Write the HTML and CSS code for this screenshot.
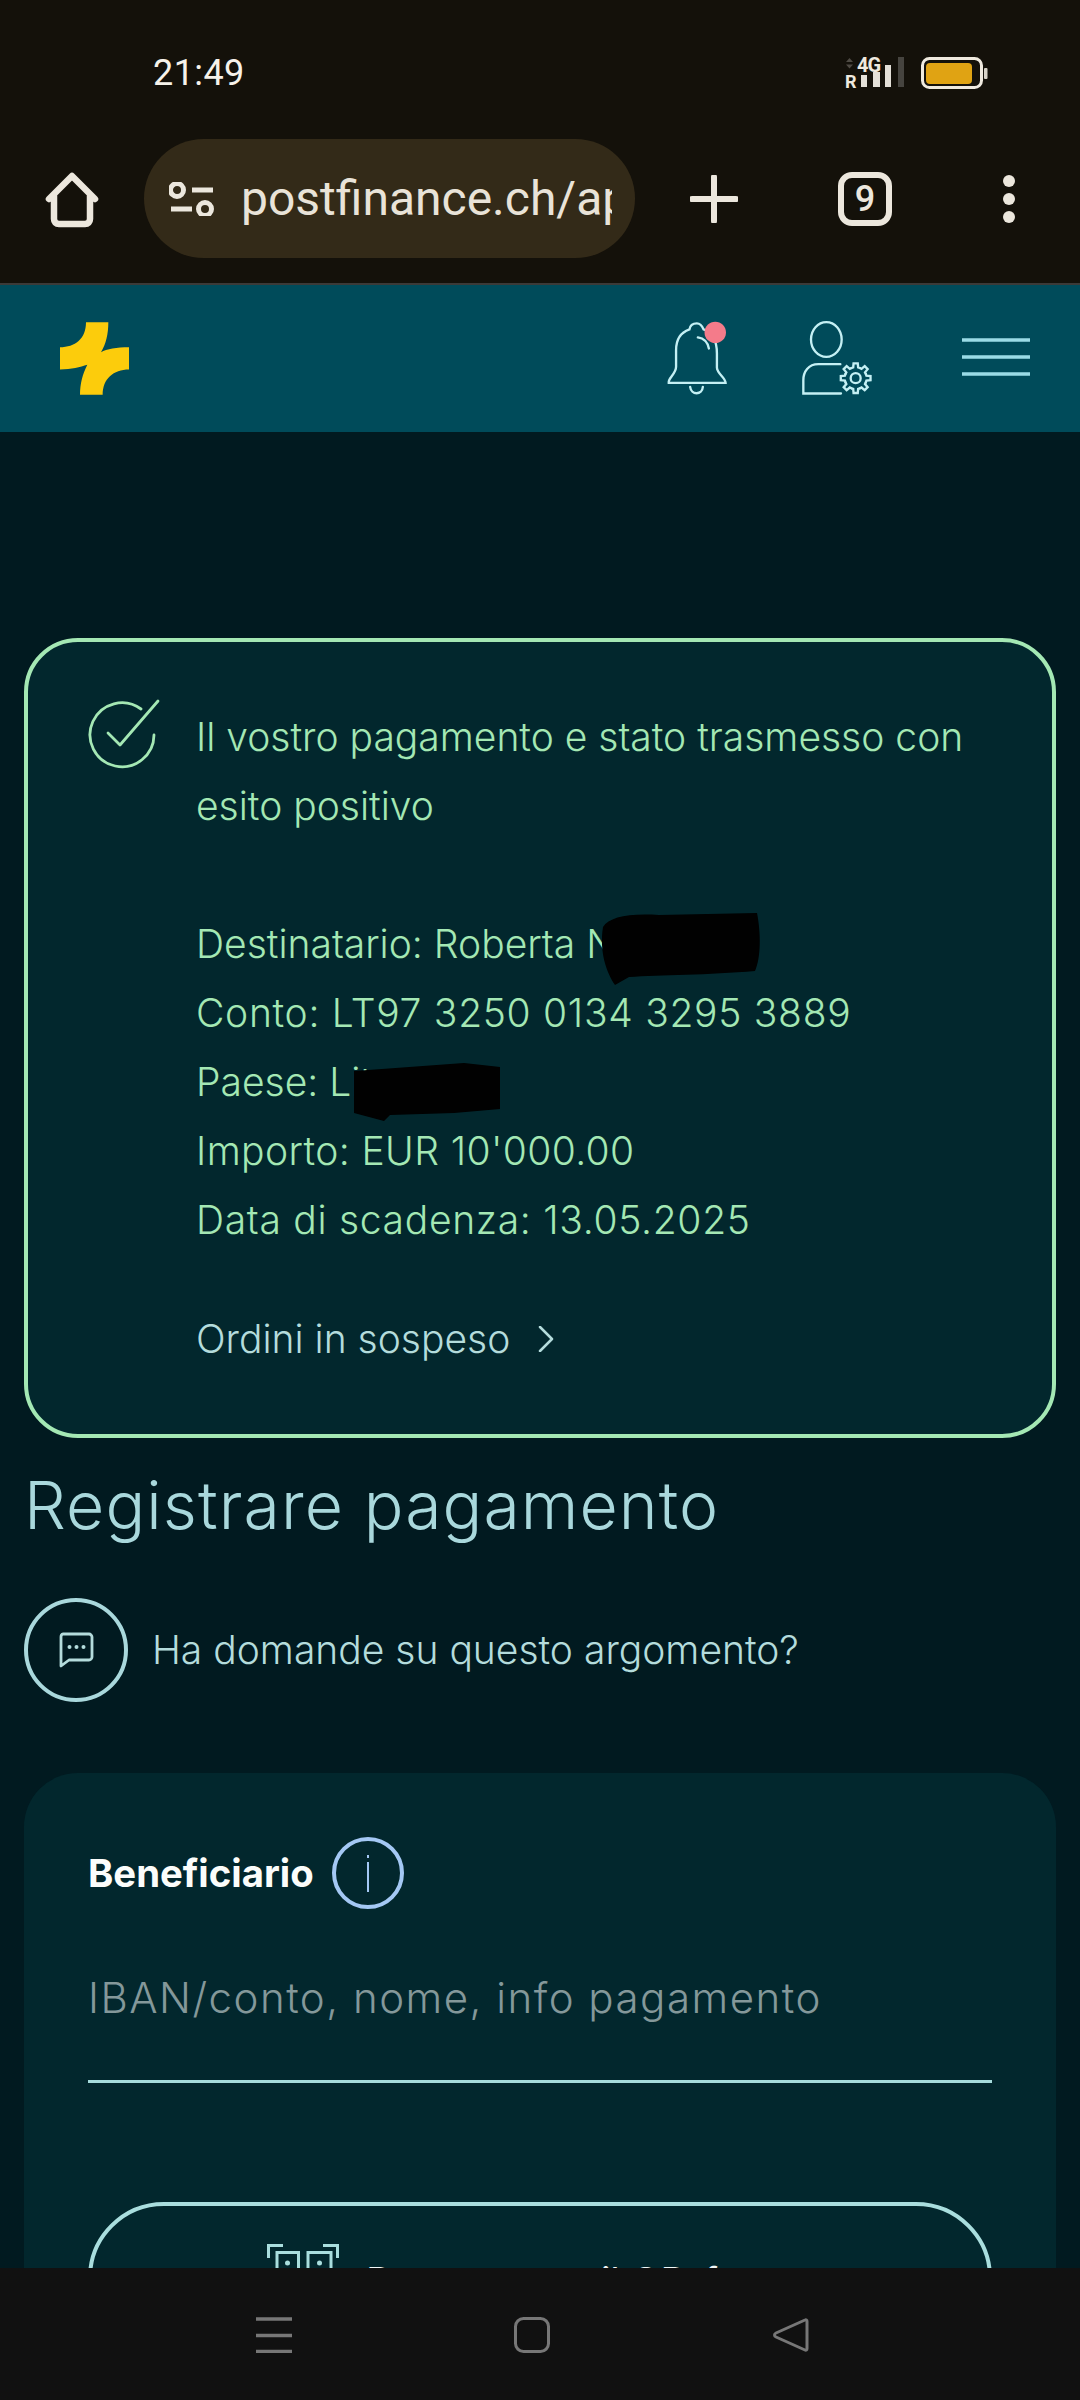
FILE: index.html
```html
<!DOCTYPE html>
<html lang="it">
<head>
<meta charset="utf-8">
<title>PostFinance</title>
<link rel="stylesheet" href="styles.css">
</head>
<body>
<div class="screen">
  <div class="chrome">
    <div class="status">
      <span class="time">21:49</span>
      <svg class="signal" viewBox="0 0 62 34" width="62" height="34">
        <path class="dim" d="M1 7 4.500 3 8 7ZM1 9.500 4.500 13.500 8 9.500Z"/>
        <text class="g4" x="12" y="17">4G</text>
        <text class="r" x="0" y="33">R</text>
        <rect class="bar" x="16" y="20" width="6" height="12"/>
        <rect class="bar" x="28" y="17" width="7" height="15"/>
        <rect class="bar" x="40" y="10" width="6" height="22"/>
        <rect class="bar-off" x="53" y="2" width="6" height="30"/>
      </svg>
      <svg class="battery" viewBox="0 0 68 32" width="68" height="32">
        <rect class="batt-frame" x="1.500" y="1.500" width="59" height="29" rx="7"/>
        <rect class="batt-fill" x="5" y="6" width="46" height="21" rx="4"/>
        <rect class="batt-nub" x="63" y="11" width="3.500" height="11" rx="1"/>
      </svg>
    </div>
    <div class="toolbar">
      <svg class="home" viewBox="0 0 60 60" width="60" height="60">
        <path d="M7 30 30 7 53 30M12 27V50C12 53 14 55 17 55H43C46 55 48 53 48 50V27" />
      </svg>
      <div class="pill">
        <svg class="tune" viewBox="0 0 46 34" width="46" height="34">
          <circle cx="8" cy="8" r="6.500"/><path d="M23 8H44M2 27H23"/><circle cx="36" cy="27" r="6.500"/>
        </svg>
        <span class="url">postfinance.ch/ap</span>
      </div>
      <svg class="plus" viewBox="0 0 48 48" width="48" height="48"><path d="M2 24H46M24 2V46"/></svg>
      <div class="tabs">9</div>
      <svg class="dots" viewBox="0 0 14 50" width="14" height="50"><circle cx="7" cy="7" r="6"/><circle cx="7" cy="25" r="6"/><circle cx="7" cy="43" r="6"/></svg>
    </div>
  </div>
  <header class="head">
    <svg class="logo" viewBox="180 575 207 218" width="69" height="73">
      <path d="M258 575H325C325 610 318 640 303 665C320 655 350 650 387 650V717C340 717 308 745 308 793H240C240 760 248 730 262 703C240 710 215 717 180 717V650C225 650 258 625 258 575Z"/>
    </svg>
    <div class="head-icons">
      <svg class="bell" viewBox="80 90 185 230" width="62" height="77">
        <path d="M88 278C86 262 110 252 110 230V180C110 140 130 125 150 118C152 105 162 100 172 100C182 100 188 108 192 118C220 128 232 150 232 190V232C232 250 258 262 258 278ZM175 142C195 145 205 160 208 175M152 290C155 315 188 315 190 290"/>
        <circle class="badge" cx="227" cy="127" r="32"/>
      </svg>
      <svg class="user" viewBox="485 90 225 230" width="75" height="77">
        <defs><path id="tooth" d="M-12.600 -30.500-7.400 -32.200-6.300 -44.600H6.300L7.400 -32.200 12.600 -30.500"/></defs>
        <ellipse cx="564" cy="148" rx="46" ry="52"/>
        <path d="M606 222H540C510 222 495 245 495 270V310H608"/>
        <g transform="translate(652 264)">
          <circle r="15"/>
          <use href="#tooth"/><use href="#tooth" transform="rotate(45)"/><use href="#tooth" transform="rotate(90)"/><use href="#tooth" transform="rotate(135)"/><use href="#tooth" transform="rotate(180)"/><use href="#tooth" transform="rotate(225)"/><use href="#tooth" transform="rotate(270)"/><use href="#tooth" transform="rotate(315)"/>
        </g>
      </svg>
      <svg class="burger" viewBox="0 0 68 38" width="68" height="38"><path d="M0 2H68M0 19H68M0 36H68"/></svg>
    </div>
  </header>
  <main class="content">
    <section class="notice">
      <svg class="check" viewBox="0 0 74 70" width="74" height="70">
        <path d="M55 10A32 32 0 1 0 68 36"/>
        <path d="M22 34 34 46 72 2"/>
      </svg>
      <div class="notice-body">
        <p class="line">Il vostro pagamento e stato trasmesso con</p>
        <p class="line">esito positivo</p>
        <p class="line spaced">Destinatario: Roberta N
          <svg class="blob blob-name" viewBox="0 0 162 72" width="162" height="72"><path d="M4 14C10 4 30 0 60 2L158 0C162 20 162 45 156 58C110 62 60 62 30 64L16 72C8 60 0 40 4 14Z"/></svg>
        </p>
        <p class="line digits">Conto: LT97 3250 0134 3295 3889</p>
        <p class="line">Paese: Lituania
          <svg class="blob blob-country" viewBox="0 0 146 58" width="146" height="58"><path d="M0 8 28 6 110 0 146 4V46L100 50 36 52 30 58 0 50Z"/></svg>
        </p>
        <p class="line amount">Importo: EUR 10'000.00</p>
        <p class="line digits">Data di scadenza: 13.05.2025</p>
        <a class="pending">Ordini in sospeso
          <svg class="chev" viewBox="0 0 16 26" width="16" height="26"><path d="M2 1 14 13 2 25"/></svg>
        </a>
      </div>
    </section>
    <h1 class="title">Registrare pagamento</h1>
    <div class="help">
      <span class="help-ring">
        <svg viewBox="0 0 36 36" width="36" height="36">
          <path d="M5 2H31C32.500 2 34 3.500 34 5V25C34 26.500 32.500 28 31 28H11L3 34V5C3 3.500 3.500 2 5 2Z"/>
          <circle class="dot" cx="11.500" cy="15" r="2"/><circle class="dot" cx="18.500" cy="15" r="2"/><circle class="dot" cx="25.500" cy="15" r="2"/>
        </svg>
      </span>
      <span class="help-text">Ha domande su questo argomento?</span>
    </div>
    <section class="form-card">
      <div class="field-label">
        <span class="label-text">Beneficiario</span>
        <span class="info"><span class="info-i"></span></span>
      </div>
      <div class="input">IBAN/conto, nome, info pagamento</div>
      <div class="qr-button">
        <svg class="qr" viewBox="0 0 72 72" width="72" height="72">
          <path d="M1.500 14V1.500H16M56 1.500H70.500V14M10 60V8.500H31.500V60M41 60V8.500H64V60"/>
          <circle class="dot" cx="20.500" cy="19" r="2.500"/><circle class="dot" cx="52.500" cy="19" r="2.500"/>
        </svg>
        <span class="qr-text">Procura con il QR-fattura</span>
      </div>
    </section>
  </main>
  <nav class="sysnav">
    <svg class="nav-menu" viewBox="0 0 36 36" width="36" height="36"><path d="M0 2H36M0 18.500H36M0 34.500H36"/></svg>
    <svg class="nav-home" viewBox="0 0 36 36" width="36" height="36"><rect x="1.500" y="1.500" width="33" height="33" rx="8"/></svg>
    <svg class="nav-back" viewBox="0 0 36 36" width="36" height="36"><path d="M32 3C33 2.500 34 3 34 4.500V31.500C34 33 33 33.500 32 33L3 20C1 19 1 17 3 16Z"/></svg>
  </nav>
</div>
</body>
</html>
```
FILE: styles.css
```css
* { box-sizing: border-box; }
html, body { margin: 0; padding: 0; background: #011a20; }
body { font-family: "Inter", "Noto Sans", sans-serif; font-weight: 300; }
svg { display: block; flex: none; fill: none; }
p { margin: 0; }

.screen { width: 1080px; height: 2400px; display: flex; flex-direction: column; overflow: hidden; }

.chrome { height: 285px; flex: none; background: #14110a; border-bottom: 2px solid #3b3a38; }
.status { height: 139px; display: flex; align-items: flex-start; padding: 55px 91px 0 153px; }
.time { font-family: "Roboto", sans-serif; font-weight: 400; font-size: 36px; line-height: 36px; color: #f6f2ea; letter-spacing: .4px; margin-right: auto; }
.signal { margin-top: 0; margin-left: 0; overflow: visible; }
.battery { margin: 2px 0 0 14px; }
.g4 { font: 700 20px "Roboto", sans-serif; fill: #eee9df; letter-spacing: -1px; }
.r { font: 700 18px "Roboto", sans-serif; fill: #eee9df; }
.bar { fill: #e4e0d8; }
.bar-off { fill: #46443f; }
.dim { fill: #4f4b44; }
.batt-frame { stroke: #efeadf; stroke-width: 3; }
.batt-fill { fill: #e0a313; }
.batt-nub { fill: #d8d3c8; }

.toolbar { display: flex; align-items: flex-start; height: 144px; padding-left: 42px; }
.home { margin-top: 30px; }
.home path { stroke: #ece7dd; stroke-width: 6.500; stroke-linecap: round; stroke-linejoin: round; }
.pill { width: 491px; height: 119px; margin-left: 42px; border-radius: 60px; background: #332a18; display: flex; align-items: center; padding: 0 23px 0 25px; overflow: hidden; }
.tune circle, .tune path { stroke: #ece7dd; stroke-width: 5; }
.url { font-family: "Roboto", sans-serif; font-weight: 400; font-size: 48px; color: #e9e3d8; margin-left: 26px; white-space: nowrap; overflow: hidden; flex: 1; }
.plus { margin: 36px 0 0 55px; }
.plus path { stroke: #ece7dd; stroke-width: 6; stroke-linecap: round; }
.tabs { width: 54px; height: 54px; margin: 33px 0 0 100px; border: 6px solid #ece7dd; border-radius: 14px; display: flex; align-items: center; justify-content: center; font-family: "Roboto", sans-serif; font-weight: 500; font-size: 36px; color: #ece7dd; }
.dots { margin: 35px 0 0 110px; }
.dots circle { fill: #ece7dd; }

.head { height: 147px; flex: none; background: #004b5a; display: flex; align-items: center; justify-content: space-between; padding: 0 50px 0 60px; }
.logo path { fill: #fccc0c; }
.head-icons { display: flex; align-items: center; }
.bell path, .user path, .user ellipse, .user circle, .user use { stroke: #c4f0f4; stroke-width: 7; stroke-linecap: round; }
.badge { fill: #f47b8a; }
.user { margin-left: 72px; }
.burger { margin-left: 87px; margin-top: -4px; }
.burger path { stroke: #9adbe6; stroke-width: 3.500; }

.content { flex: 1; min-height: 0; overflow: hidden; padding: 206px 24px 0; background: #011a20; }

.notice { height: 800px; border: 4px solid #a4e8b4; border-radius: 54px; background: #02272d; padding: 60px 40px 0 60px; display: flex; align-items: flex-start; }
.check { margin: -3px 0 0 -2px; }
.check path { stroke: #a4e8b4; stroke-width: 2.800; stroke-linecap: round; stroke-linejoin: round; }
.notice-body { margin-left: 36px; }
.line { font-size: 39px; line-height: 69px; color: #a4e8b4; position: relative; white-space: nowrap; }
.digits { letter-spacing: .7px; }
.amount { letter-spacing: .4px; }
.spaced { margin-top: 69px; }
.blob { position: absolute; }
.blob path { fill: #010101; }
.blob-name { left: 403px; top: 4px; }
.blob-country { left: 158px; top: 16px; }
.pending { display: flex; align-items: center; gap: 28px; font-size: 39px; line-height: 69px; color: #b4dcdc; margin-top: 50px; }
.chev path { stroke: #b4dcdc; stroke-width: 2.500; stroke-linecap: round; stroke-linejoin: round; }

.title { margin: 27px 0 0; font-size: 66px; line-height: 80px; font-weight: 300; letter-spacing: 1.100px; color: #a9d8dc; }
.help { display: flex; align-items: center; gap: 24px; margin-top: 53px; }
.help-ring { width: 104px; height: 104px; border: 4px solid #a9d8dc; border-radius: 50%; display: flex; align-items: center; justify-content: center; }
.help-ring path { stroke: #b4dcdc; stroke-width: 2.800; stroke-linejoin: round; }
.dot { fill: #b4dcdc; }
.help-text { font-size: 39px; line-height: 60px; color: #b4dcdc; }

.form-card { margin-top: 71px; height: 700px; border-radius: 54px; background: #02272d; padding: 64px 64px 0; }
.field-label { display: flex; align-items: center; gap: 18px; }
.label-text { font-weight: 700; font-size: 38.300px; line-height: 60px; color: #fbfdfb; }
.info { width: 72px; height: 72px; border: 4px solid #a4c8f4; border-radius: 50%; display: flex; align-items: center; justify-content: center; }
.info-i { position: relative; width: 2px; height: 30px; margin-top: 8px; background: #a4c8f4; }
.info-i::before { content: ""; position: absolute; left: 0; top: -7px; width: 2px; height: 3px; background: #a4c8f4; }
.input { margin-top: 58px; height: 116px; padding-bottom: 50px; font-size: 42px; line-height: 62px; letter-spacing: 1.500px; color: #84989a; border-bottom: 3px solid #a6dcdc; }
.qr-button { margin-top: 119px; height: 152px; border: 4px solid #a9dede; border-radius: 78px; display: flex; align-items: center; padding: 3px 0 0 175px; gap: 27px; }
.qr path { stroke: #a9dede; stroke-width: 3; }
.qr-button .dot { fill: #a9dede; }
.qr-text { font-size: 39px; font-weight: 400; color: #f0f8f8; white-space: nowrap; margin-top: 4px; }

.sysnav { height: 132px; flex: none; background: #111111; display: flex; align-items: flex-start; padding: 49px 0 0 256px; }
.nav-menu path { stroke: #777777; stroke-width: 3.500; }
.nav-home { margin-left: 222px; }
.nav-home rect { stroke: #777777; stroke-width: 3; }
.nav-back { margin-left: 223px; }
.nav-back path { stroke: #777777; stroke-width: 3; stroke-linejoin: round; }
```
